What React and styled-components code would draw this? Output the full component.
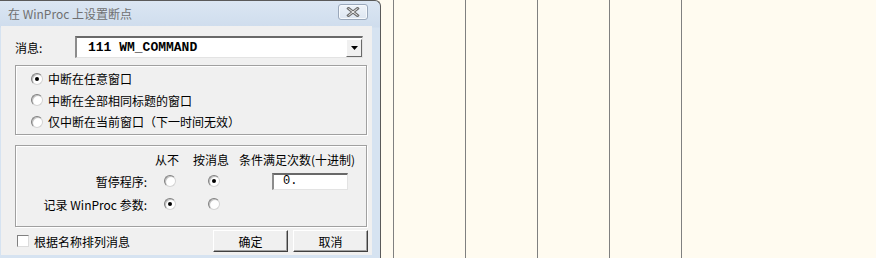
import styled, { createGlobalStyle } from 'styled-components';

const Global = createGlobalStyle`
    html, body {
        margin: 0;
        padding: 0;
        background: #fffbf0;
    }
    body {
        font-family: "Noto Sans CJK SC", "DejaVu Sans", sans-serif;
        font-size: 12px;
        color: #000;
    }
`;

function Radio({ checked }) {
    return (
        <RadioBox>
            {checked && <RadioDot />}
        </RadioBox>
    );
}

export default function App() {
    const columns = [0, 1, 2, 3, 4];

    return (
        <>
            <Global />
            <Page>
                <Window>
                    <TitleBar>
                        <Titulo>在 WinProc 上设置断点</Titulo>
                        <CloseButton>
                            <svg width="14" height="10" viewBox="0 0 14 10">
                                <path d="M2.5 1.5 L11.5 8.5 M11.5 1.5 L2.5 8.5" stroke="#6f6f6f" strokeWidth="3" strokeLinecap="square" />
                                <path d="M2.5 1.5 L11.5 8.5 M11.5 1.5 L2.5 8.5" stroke="#f4f4f4" strokeWidth="1" />
                            </svg>
                        </CloseButton>
                    </TitleBar>

                    <Client>
                        <MessageRow>
                            <Label>消息:</Label>
                            <Combo>
                                <ComboText>111 WM_COMMAND</ComboText>
                                <ComboArrow>
                                    <svg width="7" height="4" viewBox="0 0 7 4">
                                        <path d="M0 0 H7 L3.5 4 Z" fill="#000" />
                                    </svg>
                                </ComboArrow>
                            </Combo>
                        </MessageRow>

                        <Group top="7px" height="70px" pad="2px 0 0 15px">
                            <OptionRow>
                                <Radio checked />
                                <span>中断在任意窗口</span>
                            </OptionRow>
                            <OptionRow>
                                <Radio />
                                <span>中断在全部相同标题的窗口</span>
                            </OptionRow>
                            <OptionRow>
                                <Radio />
                                <span>仅中断在当前窗口（下一时间无效）</span>
                            </OptionRow>
                        </Group>

                        <Group top="10px" height="82px" pad="3px 0 0 0">
                            <Grade>
                                <span />
                                <Header>从不</Header>
                                <Header>按消息</Header>
                                <Header left>条件满足次数(十进制)</Header>

                                <RowLabel>暂停程序:</RowLabel>
                                <Cell><Radio /></Cell>
                                <Cell><Radio checked /></Cell>
                                <CountCell>
                                    <Edit>0.</Edit>
                                </CountCell>

                                <RowLabel>记录 WinProc 参数:</RowLabel>
                                <Cell><Radio checked /></Cell>
                                <Cell><Radio /></Cell>
                                <span />
                            </Grade>
                        </Group>

                        <Footer>
                            <CheckWrap>
                                <CheckBox />
                                <span>根据名称排列消息</span>
                            </CheckWrap>
                            <Buttons>
                                <Button>确定</Button>
                                <Button>取消</Button>
                            </Buttons>
                        </Footer>
                    </Client>
                </Window>

                <Canvas>
                    {columns.map((c) => (
                        <Coluna key={c} />
                    ))}
                </Canvas>
            </Page>
        </>
    );
}

const Page = styled.div`
    width: 876px;
    height: 258px;
    display: flex;
    overflow: hidden;
    background: #fffbf0;
`;

const Window = styled.div`
    width: 381px;
    height: 262px;
    flex-shrink: 0;
    box-sizing: border-box;
    border-right: 1px solid #5a5a5a;
    border-top: 1px solid #5a5a5a;
    border-top-right-radius: 6px;
    background: linear-gradient(#dbe6f3, #cfdded 26px, #d6e3f1 27px);
    padding: 0 8px 0 1px;
    display: flex;
    flex-direction: column;
`;

const TitleBar = styled.div`
    height: 25px;
    display: flex;
    align-items: center;
    justify-content: space-between;
    padding: 0 4px 0 7px;
`;

const Titulo = styled.div`
    font-family: "Noto Sans CJK SC", "DejaVu Sans", sans-serif;
    font-size: 12px;
    color: #707070;
    margin-top: -1px;
`;

const CloseButton = styled.div`
    width: 30px;
    height: 16px;
    box-sizing: border-box;
    border: 1px solid #9aa8bb;
    border-radius: 3px;
    background: linear-gradient(#eef3f9, #dde6f1);
    box-shadow: inset 0 0 0 1px #f6f9fc;
    display: flex;
    align-items: center;
    justify-content: center;
    margin-top: -4px;
`;

const Client = styled.div`
    background: #f0f0f0;
    height: 229px;
    display: flex;
    flex-direction: column;
    padding-left: 14px;
`;

const MessageRow = styled.div`
    display: flex;
    align-items: center;
    margin-top: 10px;
    height: 22px;
`;

const Label = styled.div`
    width: 60px;
    padding-top: 1px;
`;

const Combo = styled.div`
    width: 288px;
    height: 22px;
    box-sizing: border-box;
    background: #fff;
    border-top: 2px solid #696969;
    border-left: 2px solid #8c8c8c;
    border-right: 1px solid #e3e3e3;
    border-bottom: 1px solid #e3e3e3;
    display: flex;
    align-items: center;
    justify-content: space-between;
`;

const ComboText = styled.div`
    font-family: "Liberation Mono", monospace;
    font-weight: 700;
    font-size: 13px;
    padding-left: 11px;
`;

const ComboArrow = styled.div`
    width: 16px;
    height: 18px;
    box-sizing: border-box;
    background: #f0f0f0;
    border-top: 1px solid #fff;
    border-left: 1px solid #fff;
    border-right: 1px solid #696969;
    border-bottom: 1px solid #696969;
    display: flex;
    align-items: center;
    justify-content: center;
`;

const Group = styled.div`
    width: 352px;
    height: ${({ height }) => height};
    margin-top: ${({ top }) => top};
    box-sizing: border-box;
    border: 1px solid #a0a0a0;
    box-shadow: inset 1px 1px 0 #fff, 1px 1px 0 #fff;
    padding: ${({ pad }) => pad};
    display: flex;
    flex-direction: column;
`;

const OptionRow = styled.div`
    display: flex;
    align-items: center;
    gap: 5px;
    height: 21.5px;
`;

const RadioBox = styled.div`
    width: 12px;
    height: 12px;
    box-sizing: border-box;
    border-radius: 50%;
    border: 1px solid #808080;
    border-right-color: #d4d4d4;
    border-bottom-color: #d4d4d4;
    box-shadow: inset 1px 1px 0 #c0c0c0;
    background: radial-gradient(circle at 60% 60%, #ffffff 45%, #e4e4e4);
    display: flex;
    align-items: center;
    justify-content: center;
    flex-shrink: 0;
`;

const RadioDot = styled.div`
    width: 4px;
    height: 4px;
    border-radius: 50%;
    background: #000;
`;

const Grade = styled.div`
    display: grid;
    grid-template-columns: 133px 42px 46px 1fr;
    grid-template-rows: 20px 24px 22px;
    align-items: center;
`;

const Header = styled.div`
    text-align: ${({ left }) => (left ? 'left' : 'center')};
    padding-left: ${({ left }) => (left ? '2px' : '0')};
    margin-left: ${({ left }) => (left ? '0' : '-6px')};
    white-space: nowrap;
`;

const RowLabel = styled.div`
    text-align: right;
    padding-right: 2px;
    white-space: nowrap;
`;

const Cell = styled.div`
    display: flex;
    justify-content: center;
`;

const CountCell = styled.div`
    padding-left: 35px;
`;

const Edit = styled.div`
    width: 76px;
    height: 17px;
    box-sizing: border-box;
    background: #fff;
    border-top: 2px solid #696969;
    border-left: 2px solid #8c8c8c;
    border-right: 1px solid #e3e3e3;
    border-bottom: 1px solid #e3e3e3;
    font-family: "Liberation Mono", monospace;
    font-size: 12px;
    line-height: 13px;
    padding-left: 9px;
`;

const Footer = styled.div`
    display: flex;
    align-items: center;
    justify-content: space-between;
    width: 353px;
    margin-top: 3px;
    height: 22px;
`;

const CheckWrap = styled.div`
    display: flex;
    align-items: center;
    gap: 5px;
    padding-left: 2px;
`;

const CheckBox = styled.div`
    width: 12px;
    height: 12px;
    box-sizing: border-box;
    background: #fff;
    border: 1px solid #808080;
    border-right-color: #dcdcdc;
    border-bottom-color: #dcdcdc;
`;

const Buttons = styled.div`
    display: flex;
    gap: 5px;
`;

const Button = styled.div`
    width: 75px;
    height: 22px;
    box-sizing: border-box;
    background: #f0f0f0;
    border-top: 1px solid #fff;
    border-left: 1px solid #fff;
    border-right: 1px solid #404040;
    border-bottom: 1px solid #404040;
    box-shadow: inset -1px -1px 0 #a0a0a0;
    display: flex;
    align-items: center;
    justify-content: center;
`;

const Canvas = styled.div`
    flex: 1;
    display: flex;
    padding-left: 12px;
`;

const Coluna = styled.div`
    width: 71px;
    flex-shrink: 0;
    border-left: 1px solid #808080;
`;
